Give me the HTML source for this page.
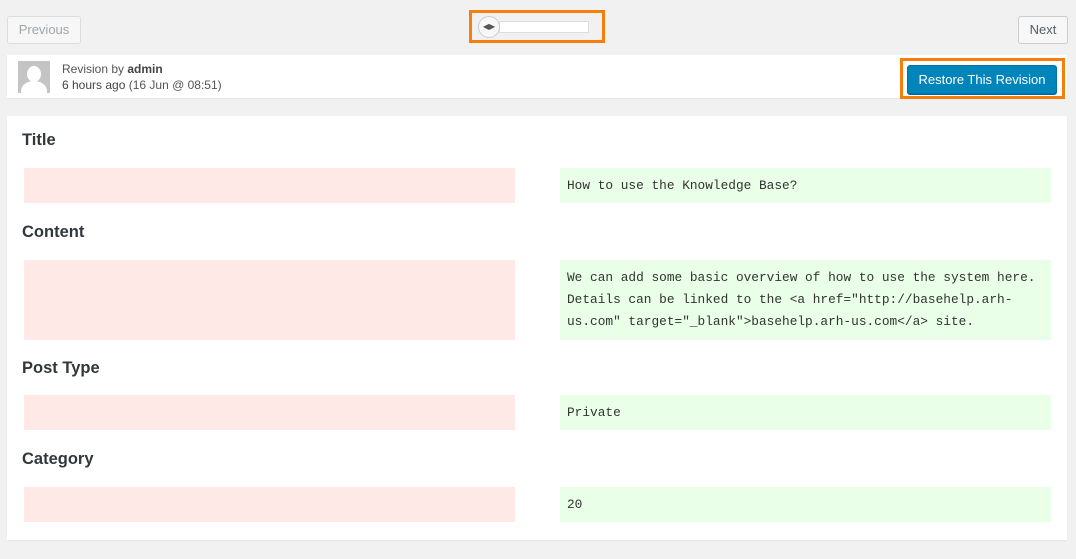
<!DOCTYPE html>
<html><head><meta charset="utf-8"><style>
*{margin:0;padding:0;box-sizing:border-box}
body{width:1076px;height:559px;background:#f1f1f1;font-family:"Liberation Sans",sans-serif;position:relative;overflow:hidden;color:#444}
.a{position:absolute}
.btn{border:1px solid #ddd;border-radius:3px;background:#f7f7f7;font-size:13px;text-align:center;line-height:25px}
.h{position:absolute;left:22px;font-size:16.5px;font-weight:bold;color:#32373c}
.r{position:absolute;left:24px;width:491px;background:#ffe9e7}
.g{position:absolute;left:560px;width:491px;background:#e9ffe8;font-family:"Liberation Mono",monospace;font-size:12.8px;color:#333;padding:9px 7px;line-height:22px}
</style></head><body>
<div class="a btn" style="left:7px;top:16px;width:74px;height:28px;color:#a0a5aa">Previous</div>
<div class="a btn" style="left:1018px;top:16px;width:50px;height:28px;color:#555d66;border-color:#ccc">Next</div>
<div class="a" style="left:469px;top:10px;width:136px;height:33px;border:3px solid #f57f0a"></div>
<div class="a" style="left:499px;top:21px;width:90px;height:12px;background:#fff;border:1px solid #ddd"></div>
<div class="a" style="left:478px;top:16px;width:22px;height:22px;border-radius:50%;background:#f7f7f7;border:1px solid #ccc;font-size:8px;line-height:20px;text-align:center;color:#555">&#9664;&#9654;</div>
<div class="a" style="left:7px;top:55px;width:1060px;height:43px;background:#fff;box-shadow:0 1px 1px rgba(0,0,0,.05)"></div>
<div class="a" style="left:18px;top:61px;width:32px;height:32px;background:#c4c4c4;overflow:hidden">
<div class="a" style="left:9px;top:5px;width:14px;height:16px;border-radius:50%;background:#fff"></div>
<div class="a" style="left:3px;top:20px;width:26px;height:20px;border-radius:50% 50% 0 0;background:#fff"></div></div>
<div class="a" style="left:62px;top:61px;font-size:12px;line-height:16px;color:#555">Revision by <b style="color:#444">admin</b><br><span style="color:#444">6 hours ago</span> (16 Jun @ 08:51)</div>
<div class="a" style="left:900px;top:58px;width:165px;height:41px;border:3px solid #f57f0a"></div>
<div class="a" style="left:907px;top:65px;width:150px;height:29px;background:#0085ba;border:1px solid #0073aa;border-radius:3px;box-shadow:0 1px 0 #006799;color:#fff;font-size:13px;text-align:center;line-height:27px">Restore This Revision</div>
<div class="a" style="left:7px;top:116px;width:1060px;height:424px;background:#fff;box-shadow:0 1px 1px rgba(0,0,0,.05)"></div>
<div class="h" style="top:131px">Title</div>
<div class="r" style="top:168px;height:35px"></div>
<div class="g" style="top:168px;height:35px;padding-top:7px">How to use the Knowledge Base?</div>
<div class="h" style="top:223px">Content</div>
<div class="r" style="top:260px;height:80px"></div>
<div class="g" style="top:260px;height:80px;padding-top:7px">We can add some basic overview of how to use the system here.<br>Details can be linked to the &lt;a href="http://basehelp.arh-<br>us.com" target="_blank"&gt;basehelp.arh-us.com&lt;/a&gt; site.</div>
<div class="h" style="top:359px">Post Type</div>
<div class="r" style="top:395px;height:35px"></div>
<div class="g" style="top:395px;height:35px;padding-top:7px">Private</div>
<div class="h" style="top:450px">Category</div>
<div class="r" style="top:487px;height:35px"></div>
<div class="g" style="top:487px;height:35px;padding-top:7px">20</div>
</body></html>
